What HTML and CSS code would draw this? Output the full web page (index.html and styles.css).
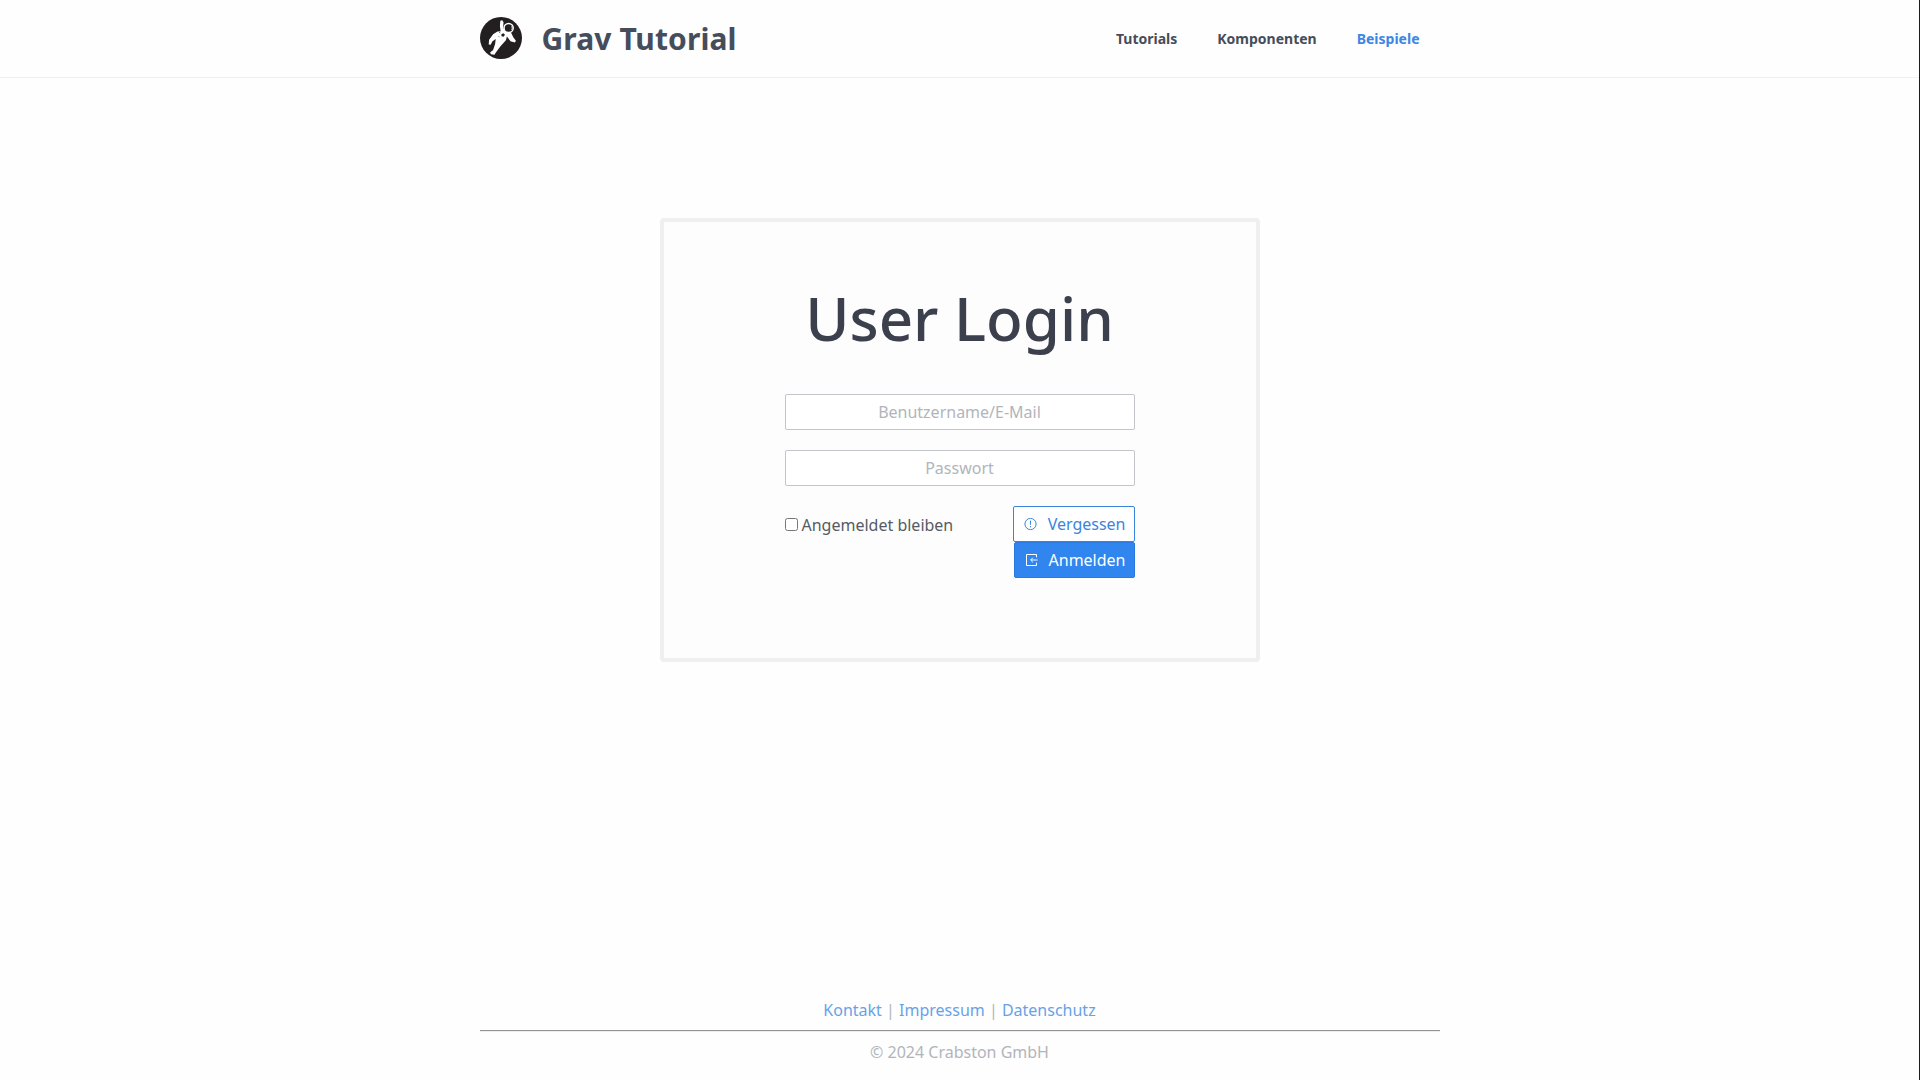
FILE: index.html
```html
<!DOCTYPE html>
<html lang="de">
<head>
<meta charset="utf-8">
<title>User Login | Grav Tutorial</title>
<link rel="stylesheet" href="styles.css">
</head>
<body>
<header class="header">
  <div class="container header-inner">
    <a class="brand" href="#">
      <svg class="logo" viewBox="0 0 42 42" aria-hidden="true">
        <circle cx="21" cy="21" r="21" fill="#231f20"/>
        <path fill="#fff" d="M20.3 3.8l2-.6 1.2 2-.4 5.6 2 3.2 6 1.8 2.2 4.4 2.6 3.6-1 1.6-4.4-1.2-3.6-4.6-1 3.6-5.4 6-5 6.8-1 1.8-3.6-.6-.8-1.8 3-2.4 2-6 .6-5-3.4 2.4-1.6 3.4-2-.4.4-4.6 4-5.6 4.4-2.6 3.2-.4-.8-5z"/>
        <circle cx="28.6" cy="11" r="4.6" fill="#231f20" stroke="#fff" stroke-width="1.5"/>
        <path d="M31.4 9.2a3 3 0 0 1 0 3.8" fill="none" stroke="#fff" stroke-width=".6"/>
        <path d="M21.4 17.2l2-1 1.6 1.5-1.5 2-2-.5z" fill="#231f20"/>
        <path d="M19.2 15.2l1 .6M18.6 19.4l.8.5" stroke="#231f20" stroke-width=".8"/>
      </svg>
      <span class="brand-name">Grav Tutorial</span>
    </a>
    <nav class="nav">
      <a href="#">Tutorials</a>
      <a href="#">Komponenten</a>
      <a class="active" href="#">Beispiele</a>
    </nav>
  </div>
</header>
<main class="main">
  <section class="card">
    <h1>User Login</h1>
    <form class="form">
      <input class="field" type="text" placeholder="Benutzername/E-Mail">
      <input class="field" type="password" placeholder="Passwort">
      <div class="actions">
        <label class="remember"><input type="checkbox"><span>Angemeldet bleiben</span></label>
        <div class="buttons">
          <a class="btn" href="#">
            <svg class="icon" viewBox="0 0 14 14" fill="none" stroke="currentColor" aria-hidden="true"><circle cx="6.5" cy="7" r="5.6"/><path d="M6.5 3.6v4.2M6.5 9v1.3"/></svg>
            <span>Vergessen</span>
          </a>
          <button class="btn primary" type="button">
            <svg class="icon" viewBox="0 0 14 14" fill="none" stroke="currentColor" aria-hidden="true"><path d="M11.5 4.3V1.5h-10v11h10V9.7"/><path d="M12.6 7H5.9M7.8 4.8L5.6 7l2.2 2.2"/></svg>
            <span>Anmelden</span>
          </button>
        </div>
      </div>
    </form>
  </section>
</main>
<footer class="footer container">
  <p><a href="#">Kontakt</a> | <a href="#">Impressum</a> | <a href="#">Datenschutz</a></p>
  <hr>
  <p>© 2024 Crabston GmbH</p>
</footer>
</body>
</html>
```
FILE: styles.css
```css
* { box-sizing: border-box; }
body {
  margin: 0;
  min-height: 100vh;
  display: flex;
  flex-direction: column;
  background: #fefefe;
  color: #555b65;
  font: 16px/24px "Noto Sans", sans-serif;
  border-right: 1px solid #1b1b1d;
}
a { color: inherit; text-decoration: none; }
.container { width: 960px; margin: 0 auto; }
.header { height: 78px; border-bottom: 1px solid #f0f0f0; }
.header-inner { height: 77px; display: flex; align-items: center; justify-content: space-between; }
.brand { display: flex; align-items: center; gap: 20px; }
.logo { width: 42px; height: 42px; margin-bottom: 2px; }
.brand-name { font-size: 30px; line-height: 42px; font-weight: 700; letter-spacing: .1px; color: #454d5d; }
.nav { display: flex; gap: 40px; padding-right: 20px; font-size: 14px; font-weight: 700; color: #454d5a; }
.nav .active { color: #3d86e4; }
.main { flex: 1; padding-top: 140px; }
.card {
  width: 600px;
  height: 444px;
  margin: 0 auto;
  padding: 60px 121px 0;
  border: 4px solid #efefef;
  border-radius: 4px;
  background: #fdfdfd;
}
h1 { margin: 0 0 40px; font-size: 60px; line-height: 72px; font-weight: 500; text-align: center; color: #3c404d; }
.form { display: flex; flex-direction: column; gap: 20px; }
.field {
  width: 100%;
  height: 36px;
  padding: 5px 8px;
  border: 1px solid #c2c4c9;
  border-radius: 2px;
  background: #fff;
  font: inherit;
  text-align: center;
  outline: 0;
}
.field::placeholder { color: #b1b5bb; }
.actions { display: flex; justify-content: space-between; align-items: flex-start; }
.remember { display: flex; align-items: center; gap: 4px; height: 37px; }
.remember input { width: 13px; height: 13px; margin: 0; }
.buttons { display: flex; flex-direction: column; align-items: flex-end; }
.btn {
  display: flex;
  align-items: center;
  gap: 10px;
  height: 36px;
  padding: 5px 8px 5px 10px;
  border: 1px solid #3b84dc;
  border-radius: 2px;
  background: #fff;
  color: #3b84e0;
  font: inherit;
}
.btn.primary { background: #3085ee; color: #fff; border-color: #2a79df; }
.icon { width: 14px; height: 14px; }
.footer { text-align: center; color: #b1b5bb; padding-bottom: 16px; }
.footer p { margin: 0; }
.footer a { color: #68a2e8; }
.footer hr { margin: 8px 0; border: 0; border-top: 1px solid #949494; border-bottom: 1px solid #ececec; }
```
